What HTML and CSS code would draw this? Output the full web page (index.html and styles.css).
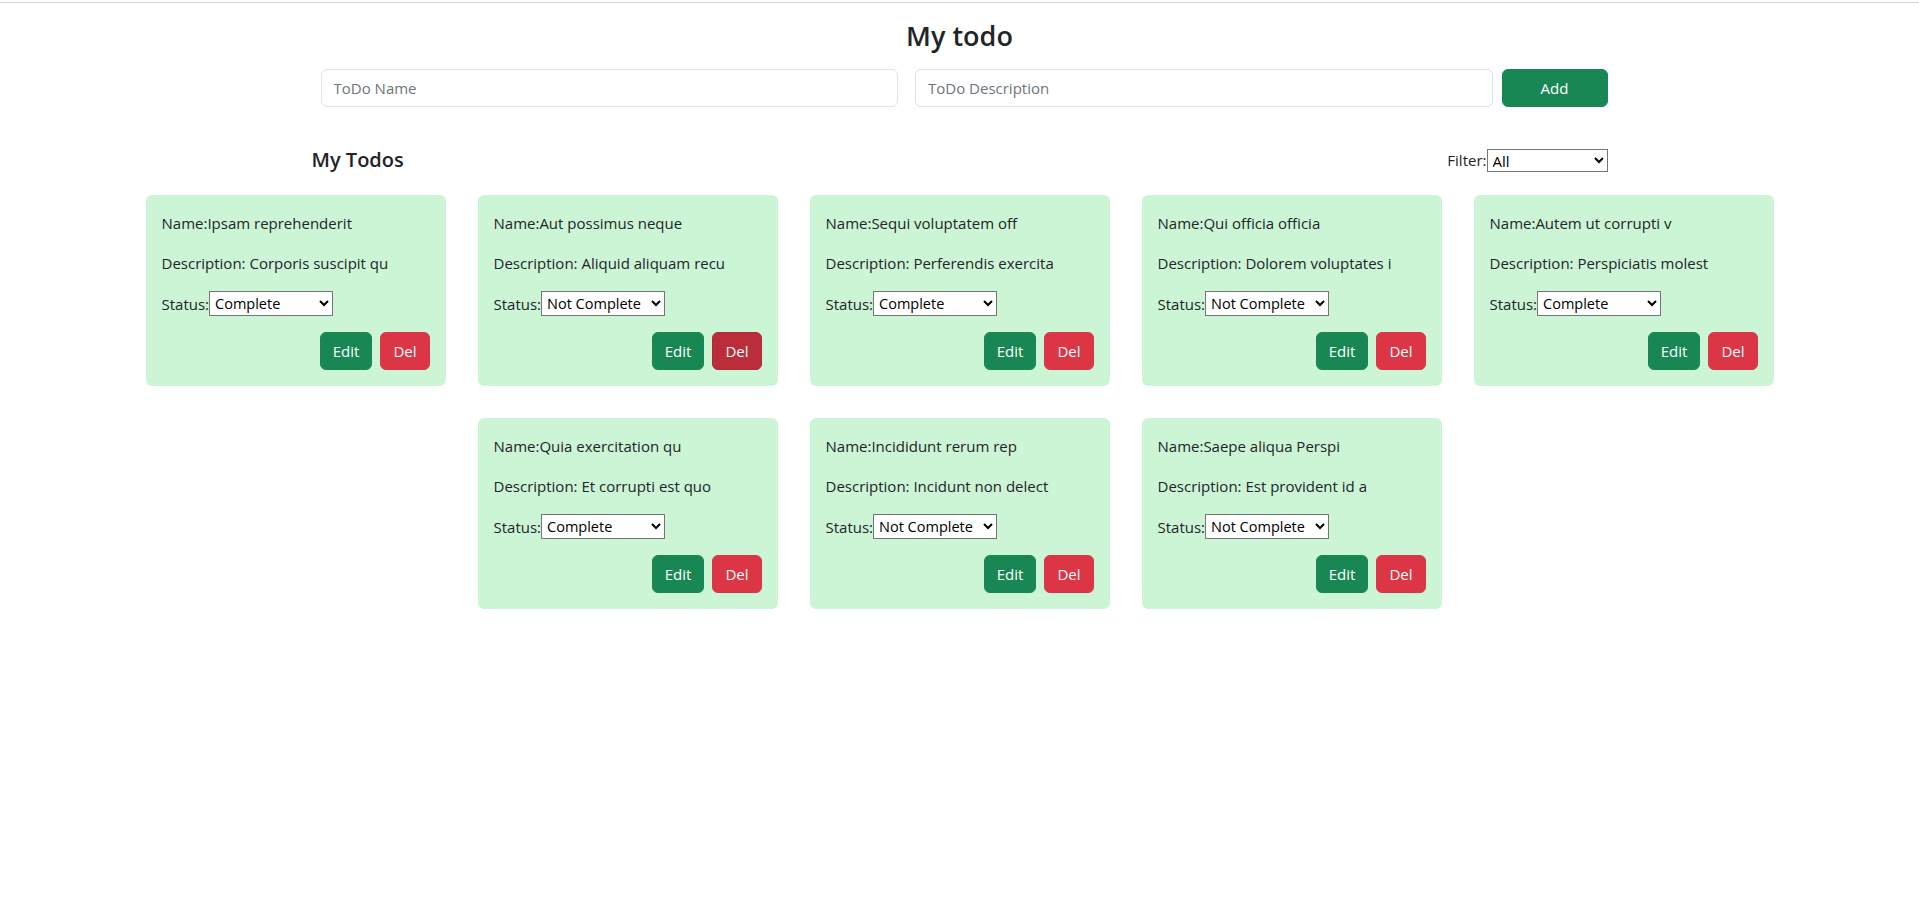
FILE: index.html
```html
<!DOCTYPE html>
<html lang="en">
<head>
<meta charset="utf-8">
<title>My todo</title>
<link rel="stylesheet" href="styles.css">
</head>
<body>
<div class="topline"></div>
<div class="container">
  <h3 class="title">My todo</h3>
  <form class="add-form">
    <input class="field field-name" type="text" placeholder="ToDo Name">
    <input class="field field-desc" type="text" placeholder="ToDo Description">
    <button class="btn btn-success btn-add" type="button">Add</button>
  </form>
  <div class="list-head">
    <h5 class="list-title">My Todos</h5>
    <div class="filter"><label>Filter:</label><select class="filter-select"><option>All</option><option>Complete</option><option>Not Complete</option></select></div>
  </div>
</div>
<div class="cards">
  <div class="card">
    <p>Name:Ipsam reprehenderit</p>
    <p>Description: Corporis suscipit qu</p>
    <p class="status">Status:<select class="status-select"><option selected>Complete</option><option>Not Complete</option></select></p>
    <div class="actions"><button class="btn btn-success">Edit</button><button class="btn btn-danger">Del</button></div>
  </div>
  <div class="card">
    <p>Name:Aut possimus neque</p>
    <p>Description: Aliquid aliquam recu</p>
    <p class="status">Status:<select class="status-select"><option>Complete</option><option selected>Not Complete</option></select></p>
    <div class="actions"><button class="btn btn-success">Edit</button><button class="btn btn-danger btn-hover">Del</button></div>
  </div>
  <div class="card">
    <p>Name:Sequi voluptatem off</p>
    <p>Description: Perferendis exercita</p>
    <p class="status">Status:<select class="status-select"><option selected>Complete</option><option>Not Complete</option></select></p>
    <div class="actions"><button class="btn btn-success">Edit</button><button class="btn btn-danger">Del</button></div>
  </div>
  <div class="card">
    <p>Name:Qui officia officia</p>
    <p>Description: Dolorem voluptates i</p>
    <p class="status">Status:<select class="status-select"><option>Complete</option><option selected>Not Complete</option></select></p>
    <div class="actions"><button class="btn btn-success">Edit</button><button class="btn btn-danger">Del</button></div>
  </div>
  <div class="card">
    <p>Name:Autem ut corrupti v</p>
    <p>Description: Perspiciatis molest</p>
    <p class="status">Status:<select class="status-select"><option selected>Complete</option><option>Not Complete</option></select></p>
    <div class="actions"><button class="btn btn-success">Edit</button><button class="btn btn-danger">Del</button></div>
  </div>
  <div class="card">
    <p>Name:Quia exercitation qu</p>
    <p>Description: Et corrupti est quo</p>
    <p class="status">Status:<select class="status-select"><option selected>Complete</option><option>Not Complete</option></select></p>
    <div class="actions"><button class="btn btn-success">Edit</button><button class="btn btn-danger">Del</button></div>
  </div>
  <div class="card">
    <p>Name:Incididunt rerum rep</p>
    <p>Description: Incidunt non delect</p>
    <p class="status">Status:<select class="status-select"><option>Complete</option><option selected>Not Complete</option></select></p>
    <div class="actions"><button class="btn btn-success">Edit</button><button class="btn btn-danger">Del</button></div>
  </div>
  <div class="card">
    <p>Name:Saepe aliqua Perspi</p>
    <p>Description: Est provident id a</p>
    <p class="status">Status:<select class="status-select"><option>Complete</option><option selected>Not Complete</option></select></p>
    <div class="actions"><button class="btn btn-success">Edit</button><button class="btn btn-danger">Del</button></div>
  </div>
</div>
</body>
</html>
```
FILE: styles.css
```css
* { box-sizing: border-box; }
html, body { margin: 0; padding: 0; }
body {
  font-family: "Open Sans", "Noto Sans", "Liberation Sans", sans-serif;
  font-size: 16px;
  line-height: 1.5;
  color: #212529;
  background: #fff;
}
.topline {
  height: 1px;
  margin-top: 2px;
  background: #d4d4d4;
}
.container {
  width: 1296px;
  margin: 0 auto;
}
.title {
  margin: 17px 0 0;
  font-size: 27px;
  font-weight: 600;
  line-height: 1.2;
  text-align: center;
}
.add-form {
  display: flex;
  margin-top: 17px;
  padding-left: 9px;
}
.field {
  flex: 1;
  height: 38px;
  padding: 6px 12px;
  font: inherit;
  font-size: 15px;
  color: #212529;
  border: 1px solid #dee2e6;
  border-radius: 6px;
  outline: none;
}
.field::placeholder { color: #6c757d; }
.field-name { margin-right: 17px; }
.field-desc { margin-right: 9px; }
.btn {
  font: inherit;
  font-size: 15px;
  line-height: 24px;
  padding: 6px 12px;
  border: 1px solid transparent;
  border-radius: 6px;
  color: #fff;
  cursor: pointer;
}
.btn-success { background: #198754; border-color: #198754; }
.btn-danger { background: #dc3545; border-color: #dc3545; }
.btn-danger.btn-hover { background: #bb2d3b; border-color: #b02a37; }
.btn-add { width: 106px; height: 38px; }
.list-head {
  display: flex;
  justify-content: space-between;
  align-items: center;
  margin-top: 41px;
  margin-bottom: 7px;
  height: 24px;
}
.list-title {
  margin: 0;
  font-size: 20px;
  font-weight: 600;
  line-height: 1.2;
}
.filter {
  display: flex;
  align-items: center;
  font-size: 15px;
}
.filter-select {
  width: 121px;
  height: 23px;
  font-family: inherit;
  font-size: 15px;
  color: #000;
  background: #fff;
  border: 1px solid #767676;
  border-radius: 0;
  padding: 0 0 0 1px;
}
.cards {
  display: flex;
  flex-wrap: wrap;
  justify-content: center;
}
.card {
  width: 300px;
  margin: 16px;
  padding: 16px;
  background: #ccf5d6;
  border-radius: 6px;
}
.card p {
  margin: 0 0 16px;
  font-size: 15px;
  line-height: 24px;
  white-space: nowrap;
}
.card .status {
  display: flex;
  align-items: center;
  height: 25px;
}
.status-select {
  width: 124px;
  height: 25px;
  font-family: inherit;
  font-size: 14.5px;
  color: #000;
  background: #fff;
  border: 1px solid #767676;
  border-radius: 0;
  padding: 0 0 0 1px;
}
.actions {
  display: flex;
  justify-content: flex-end;
  gap: 8px;
}
.actions .btn { height: 38px; }
```
